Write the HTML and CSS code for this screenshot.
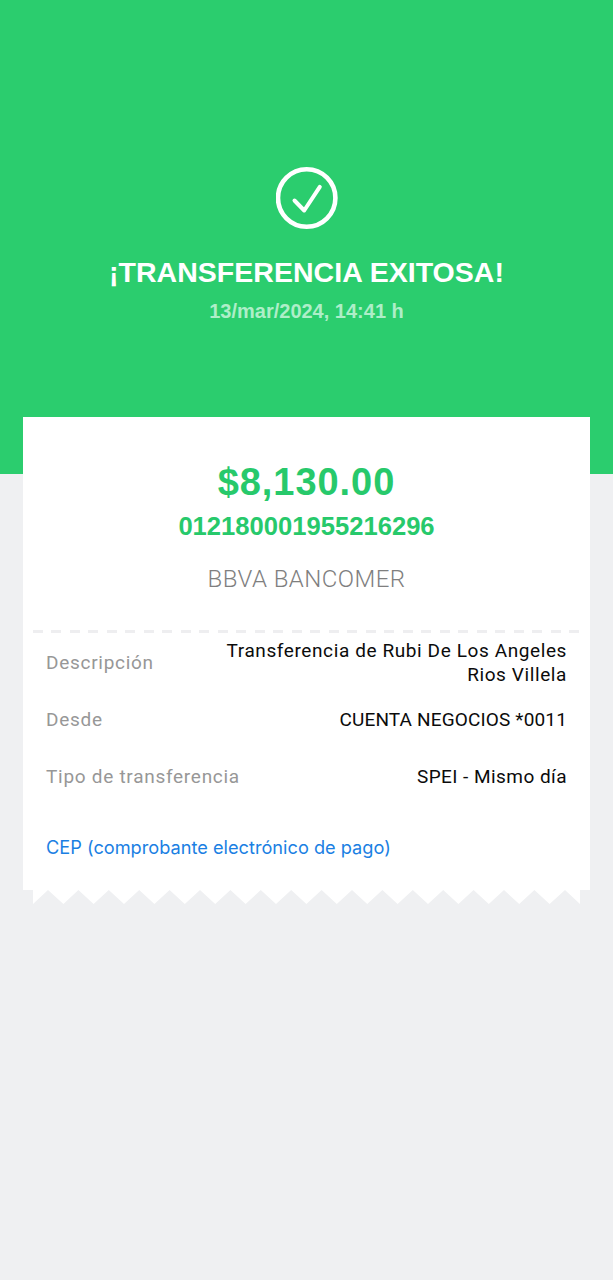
FILE: index.html
```html
<!DOCTYPE html>
<html lang="es">
<head>
<meta charset="utf-8">
<title>Transferencia exitosa</title>
<link rel="stylesheet" href="styles.css">
</head>
<body>
<header class="hero">
  <svg class="check" viewBox="0 0 62 62" width="62" height="62" aria-hidden="true">
    <circle cx="30.7" cy="31" r="28.7" fill="none" stroke="#fff" stroke-width="4.6"/>
    <path d="M18.5 33.5 L28.2 43.5 L43.8 19.8" fill="none" stroke="#fff" stroke-width="4" stroke-linecap="round" stroke-linejoin="round"/>
  </svg>
  <h1 class="title">¡TRANSFERENCIA EXITOSA!</h1>
  <p class="date">13/mar/2024, 14:41 h</p>
</header>
<main class="ticket">
  <section class="card">
    <div class="summary">
      <div class="amount">$8,130.00</div>
      <div class="account">012180001955216296</div>
      <div class="bank">BBVA BANCOMER</div>
    </div>
    <div class="dash"></div>
    <dl class="details">
      <div class="row row-desc">
        <dt>Descripción</dt>
        <dd class="wide">Transferencia de Rubi De Los Angeles<br>Rios Villela</dd>
      </div>
      <div class="row">
        <dt>Desde</dt>
        <dd class="caps">CUENTA NEGOCIOS *0011</dd>
      </div>
      <div class="row">
        <dt>Tipo de transferencia</dt>
        <dd>SPEI - Mismo día</dd>
      </div>
    </dl>
    <a class="cep" href="#">CEP (comprobante electrónico de pago)</a>
  </section>
  <svg class="teeth" viewBox="0 0 547 14" width="547" height="14" preserveAspectRatio="none" aria-hidden="true">
    <polygon fill="#fff" points="0,0 547,0 547,14 532,0 516.6,14 501.4,0 486.2,14 471,0 455.8,14 440.6,0 425.4,14 410.2,0 395,14 379.8,0 364.6,14 349.4,0 334.2,14 319,0 303.8,14 288.6,0 273.4,14 258.2,0 243,14 227.8,0 212.6,14 197.4,0 182.2,14 167,0 151.8,14 136.6,0 121.4,14 106.2,0 91,14 75.8,0 60.6,14 45.4,0 30.4,14 15,0 0,14"/>
  </svg>
</main>
</body>
</html>
```
FILE: styles.css
```css
* { box-sizing: border-box; }
html, body { margin: 0; padding: 0; }
body {
  width: 613px;
  min-height: 1280px;
  background: #eff0f2;
  font-family: "Inter", "Liberation Sans", sans-serif;
  overflow: hidden;
}
.hero {
  height: 474px;
  background: #2bcd6e;
  display: flex;
  flex-direction: column;
  align-items: center;
  padding-top: 167px;
  color: #fff;
}
.check { display: block; }
.title {
  margin: 25px 0 0;
  font: 700 28.5px/36px "Liberation Sans", Arial, sans-serif;
  letter-spacing: 0.03px;
}
.date {
  margin: 9px 0 0;
  font: 700 20px/24px "Liberation Sans", Arial, sans-serif;
  color: #aeeec8;
}
.ticket {
  margin-top: -57px;
  display: flex;
  flex-direction: column;
  align-items: center;
}
.card {
  width: 567px;
  height: 473px;
  background: #fff;
  display: flex;
  flex-direction: column;
}
.summary {
  height: 213px;
  display: flex;
  flex-direction: column;
  align-items: center;
  padding-top: 43px;
}
.amount {
  font: 700 38px/44px "Liberation Sans", Arial, sans-serif;
  letter-spacing: 0.95px;
  color: #27c96b;
}
.account {
  margin-top: 6px;
  font: 700 25.6px/32px "Liberation Sans", Arial, sans-serif;
  color: #27c96b;
}
.bank {
  margin-top: 22px;
  font: 300 24px/30px "Roboto", sans-serif;
  letter-spacing: 0.45px;
  color: #7f7f7f;
}
.dash {
  margin: 0 10px;
  height: 3px;
  background: repeating-linear-gradient(90deg, #eeeef0 0 10px, transparent 10px 18.5px);
}
.details {
  margin: 0;
  padding: 6px 23px 0;
  display: flex;
  flex-direction: column;
}
.row {
  height: 57px;
  display: flex;
  align-items: center;
  justify-content: space-between;
}
.row-desc { height: 48px; margin-bottom: 4px; }
.row dt {
  font: 400 19px/24px "Roboto", sans-serif;
  letter-spacing: 0.72px;
  color: #979797;
}
.row dd {
  margin: 0;
  font: 400 19px/24px "Roboto", sans-serif;
  letter-spacing: 0.45px;
  color: #0b0b0b;
  text-align: right;
}
.row dd.wide { letter-spacing: 0.6px; }
.row dd.caps { letter-spacing: 0.15px; }
.cep {
  margin: 30px 23px 0;
  font: 400 18.2px/24px "Inter", sans-serif;
  color: #1b7fe3;
  text-decoration: none;
}
.teeth { display: block; }
```
